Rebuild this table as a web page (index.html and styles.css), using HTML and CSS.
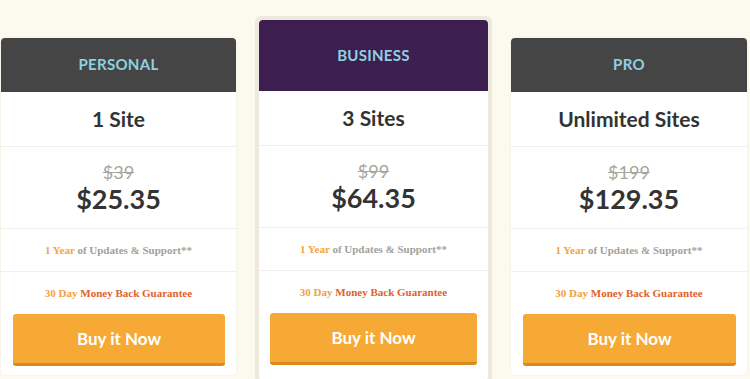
FILE: index.html
```html
<!DOCTYPE html>
<html>
<head>
<meta charset="utf-8">
<link rel="stylesheet" href="styles.css">
</head>
<body>
<div class="pricing">
  <div class="plan">
    <div class="plan-head">PERSONAL</div>
    <div class="row sites">1 Site</div>
    <div class="row price"><span class="old">$39</span><span class="new">$25.35</span></div>
    <div class="row feat"><p><span class="hl">1 Year</span> of Updates &amp; Support**</p></div>
    <div class="row guar"><p><span class="hl">30 Day</span> Money Back Guarantee</p></div>
    <div class="btn-wrap"><a class="btn">Buy it Now</a></div>
  </div>
  <div class="plan featured">
    <div class="plan-head">BUSINESS</div>
    <div class="row sites">3 Sites</div>
    <div class="row price"><span class="old">$99</span><span class="new">$64.35</span></div>
    <div class="row feat"><p><span class="hl">1 Year</span> of Updates &amp; Support**</p></div>
    <div class="row guar"><p><span class="hl">30 Day</span> Money Back Guarantee</p></div>
    <div class="btn-wrap"><a class="btn">Buy it Now</a></div>
  </div>
  <div class="plan">
    <div class="plan-head">PRO</div>
    <div class="row sites">Unlimited Sites</div>
    <div class="row price"><span class="old">$199</span><span class="new">$129.35</span></div>
    <div class="row feat"><p><span class="hl">1 Year</span> of Updates &amp; Support**</p></div>
    <div class="row guar"><p><span class="hl">30 Day</span> Money Back Guarantee</p></div>
    <div class="btn-wrap"><a class="btn">Buy it Now</a></div>
  </div>
</div>
</body>
</html>
```
FILE: styles.css
```css
html, body {
  margin: 0;
  padding: 0;
  background: #fcf9ef;
  height: 379px;
  overflow: hidden;
}
.pricing {
  display: flex;
  align-items: flex-start;
  gap: 19px;
  padding: 38px 0 0 1px;
  font-family: Lato, "Open Sans", sans-serif;
}
.plan {
  width: 235px;
  background: #fff;
  border-radius: 4px;
  box-shadow: 0 0 2px rgba(0,0,0,0.08);
}
.plan:last-child { width: 236px; }
.plan-head {
  height: 54px;
  background: #454545;
  border-radius: 4px 4px 0 0;
  color: #8fd0e2;
  font-weight: 700;
  font-size: 15px;
  letter-spacing: 0.3px;
  display: flex;
  align-items: center;
  justify-content: center;
  padding-bottom: 3px;
  box-sizing: border-box;
}
.featured {
  width: 229px;
  margin-top: -22px;
  border: 4px solid #ede9dc;
  border-radius: 6px;
  box-shadow: none;
}
.featured .plan-head {
  height: 71px;
  background: #3d1f4f;
  padding-bottom: 1px;
}
.row {
  border-bottom: 1px solid #f1efe9;
  display: flex;
  align-items: center;
  justify-content: center;
}
.row p { margin: 0; }
.sites {
  height: 55px;
  font-size: 21px;
  font-weight: 700;
  color: #333;
  padding-bottom: 1px;
  box-sizing: border-box;
}
.price {
  height: 81px;
  flex-direction: column;
  color: #333;
}
.old {
  font-size: 18px;
  color: #a7a59c;
  text-decoration: line-through;
  line-height: 18px;
  margin-bottom: 4px;
}
.new {
  font-size: 27px;
  font-weight: 700;
  line-height: 28px;
}
.feat, .guar {
  font-family: "Liberation Serif", serif;
  font-weight: 700;
  font-size: 11px;
}
.feat {
  height: 42px;
  color: #a3a19b;
}
.feat .hl { color: #f3a443; }
.guar {
  height: 42px;
  border-bottom: none;
  color: #e0622a;
}
.guar .hl { color: #f0a046; }
.btn-wrap {
  padding: 0 11px 9px 12px;
}
.btn {
  display: flex;
  align-items: center;
  justify-content: center;
  height: 49px;
  background: #f7a935;
  border-bottom: 3px solid #d88b1c;
  border-radius: 3px;
  color: #fff;
  font-weight: 700;
  font-size: 17px;
}
.featured .btn-wrap { padding: 0 11px 14px 11px; }
```
